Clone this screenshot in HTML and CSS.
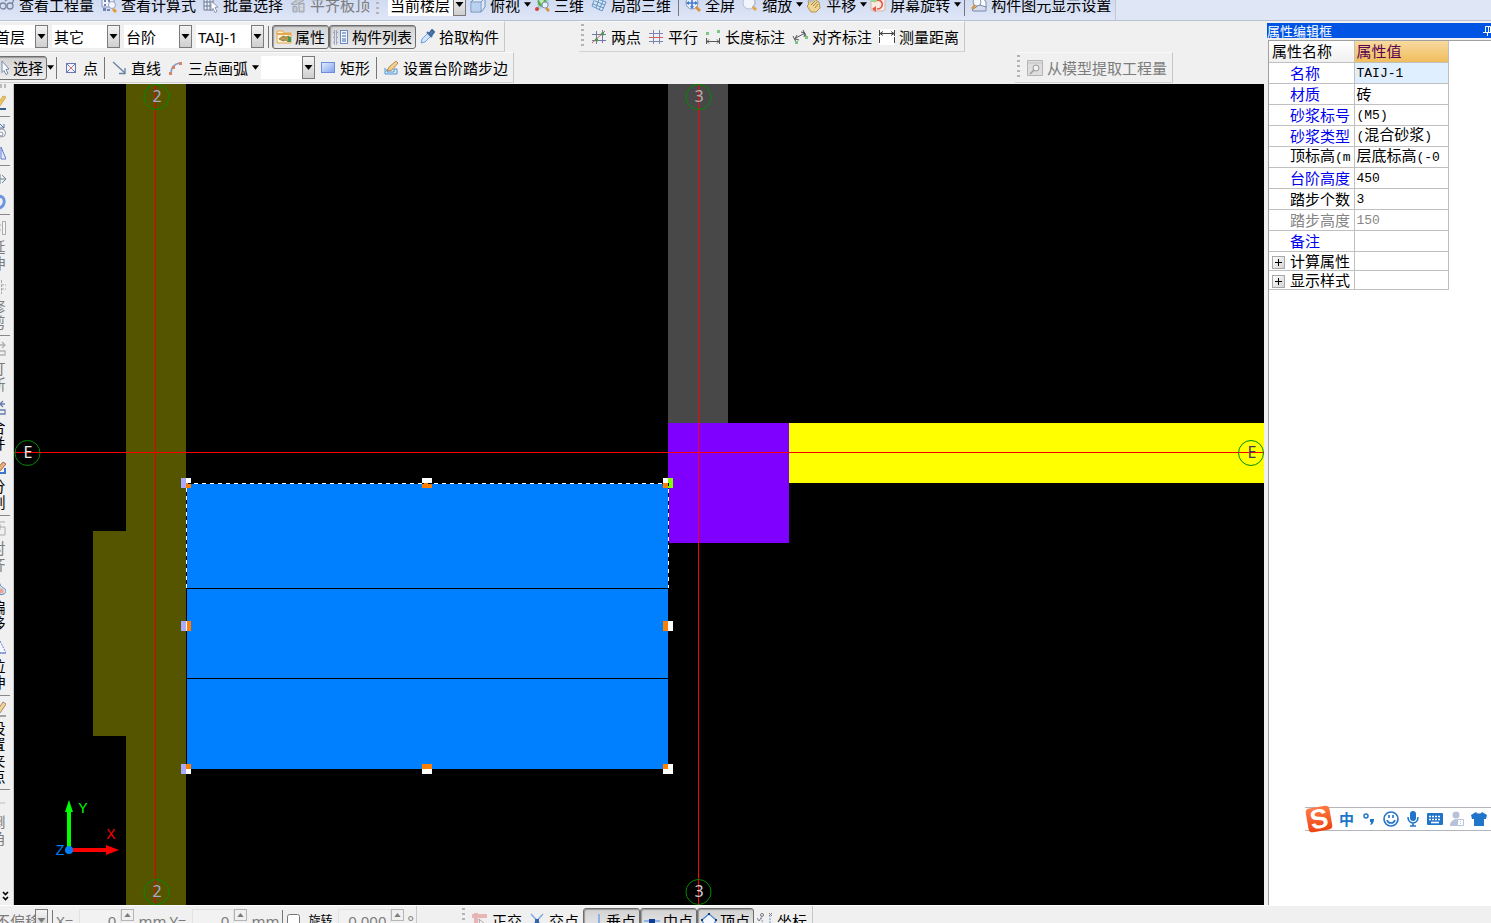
FILE: index.html
```html
<!DOCTYPE html>
<html lang="zh-CN">
<head>
<meta charset="utf-8">
<title>台阶 - 绘图</title>
<link rel="stylesheet" href="styles.css">
</head>
<body>
<svg class="symbols" aria-hidden="true">
  <defs>
    <linearGradient id="g-blue" x2="1" y2="1"><stop offset="0" stop-color="#e4edff"/><stop offset="1" stop-color="#7fa2ea"/></linearGradient>
    <linearGradient id="g-logo" y2="1" x2="0"><stop offset="0" stop-color="#ff7a45"/><stop offset="1" stop-color="#ee4410"/></linearGradient>
  </defs>
  <symbol id="i-drop" viewBox="0 0 8 5"><path d="M0 0h8L4 5z" fill="currentColor"/></symbol>
  <symbol id="i-glasses" viewBox="0 0 16 16"><g fill="none" stroke="#7b869c" stroke-width="1.3"><circle cx="4" cy="9" r="3"/><circle cx="11" cy="9" r="3"/><path d="M13 7l2-5-3-1M6 4l3-2"/></g></symbol>
  <symbol id="i-calc" viewBox="0 0 16 16"><path d="M1 0h12v10H1z" fill="#eef3fc" stroke="#8492b4"/><path d="M3 3h2v2H3zM7 3h2v2H7zM3 7h2v2H3zM2 11h3v3H2zM6 12h3v2H6z" fill="#6f83b5"/><circle cx="11" cy="8" r="3.5" fill="#f5f8ff" stroke="#96a3bd"/><path d="M12 12l3 3" stroke="#e59a39" stroke-width="3"/></symbol>
  <symbol id="i-batch" viewBox="0 0 16 16"><path d="M1 1h9v12H1zM1 5h9M1 9h9M4 1v12M7 1v12" fill="#eef2fb" stroke="#6b7793"/><path d="M8 4l7 6-3 .5 2 4-2 1-2-4-2 2z" fill="#fff" stroke="#8c97ae"/></symbol>
  <symbol id="i-align" viewBox="0 0 16 16"><path d="M1 7l7-5 6 1-8 5zM3 9l4 1v5H3zM9 7l5-1v9H9z" fill="#c3c8d1" stroke="#9da3ad"/><path d="M10 9h3M10 12h3" stroke="#eee"/></symbol>
  <symbol id="i-cube" viewBox="0 0 16 16"><path d="M1 5l4-4h10v9l-4 5H1z" fill="#dceafa" stroke="#6f8fb9"/><path d="M1 5h10v10M11 5l4-4" fill="none" stroke="#6f8fb9"/><path d="M2 6h8v8H2z" fill="#b9d2f0"/></symbol>
  <symbol id="i-3d" viewBox="0 0 16 16"><path d="M1 14l5-10 8-3 1 8-7 2z" fill="#a8cce4"/><circle cx="8" cy="5" r="4.5" fill="#58ad4f"/><path d="M5 3l3-2 2 3-3 3z" fill="#c2edba"/><circle cx="3" cy="12" r="2" fill="#d54536"/><circle cx="11" cy="8" r="3" fill="#e9f2fc" stroke="#8296b2"/><path d="M12 11l3 3" stroke="#d29439" stroke-width="2.5"/></symbol>
  <symbol id="i-local" viewBox="0 0 16 16"><path d="M4 1l11 4-4 9L1 9z" fill="#d7e7f9" stroke="#6693c2"/><path d="M8 2L5 11M12 4l-4 9M2 7l11 4M4 4l10 4" stroke="#6693c2" fill="none"/></symbol>
  <symbol id="i-full" viewBox="0 0 16 16"><circle cx="7" cy="6" r="6" fill="#e5f0ff" stroke="#8a94ab"/><path d="M7 1v10M2 6h10" stroke="#4979c9" stroke-width="1.6"/><path d="M7 0l2 3H5zM7 12l2-3H5zM1 6l3-2v4zM13 6l-3-2v4z" fill="#4979c9"/><path d="M11 10l4 4" stroke="#dc913a" stroke-width="3"/></symbol>
  <symbol id="i-zoom" viewBox="0 0 16 16"><circle cx="7" cy="6" r="6" fill="#f1f5fc" stroke="#b9c0ce"/><path d="M11 1c3 3 3 6-1 9" stroke="#a9b4c5" fill="none"/><path d="M11 10l3 3" stroke="#e1a646" stroke-width="3"/></symbol>
  <symbol id="i-hand" viewBox="0 0 16 16"><path d="M2 4l4-3 7 4 1 6-4 4H5L1 9l2-2z" fill="#efd593" stroke="#b79551"/><path d="M5 8l4-4M7 9l4-4M9 11l3-4" stroke="#a98743"/><path d="M2 2l4-2 3 3-5 3z" fill="#aebdd0"/></symbol>
  <symbol id="i-rotate" viewBox="0 0 16 16"><rect x="1" y="1" width="14" height="13" rx="2" fill="#fbeadf" stroke="#d4b7a8"/><path d="M4 5c3-3 7-2 8 1s-1 6-5 6" fill="none" stroke="#e2574b" stroke-width="1.6"/><path d="M6 9v6l-4-3z" fill="#e2574b"/><path d="M1 1h6v4H1z" fill="#9bd78e"/></symbol>
  <symbol id="i-display" viewBox="0 0 16 16"><path d="M1 13l7-5 7 1v5H2z" fill="#d5dded" stroke="#7b8aa8"/><path d="M8 2l4-1 3 4v5l-6-2z" fill="#fff" stroke="#7b8aa8"/><circle cx="6" cy="5" r="4" fill="#f4f8ff" stroke="#8a94a8"/><path d="M4 8l-3 4" stroke="#d89a3a" stroke-width="2.5"/></symbol>
  <symbol id="i-prop" viewBox="0 0 16 16"><path d="M1 2h6l1 2h7v10H1z" fill="#fff3d8" stroke="#e6a74d"/><path d="M1 5h14" stroke="#e6a74d" stroke-width="2"/><path d="M3 10l4-3 3 1 3-1 2 4-3 2-2-2-3 1z" fill="#b89a4f" stroke="#7a6530" stroke-width=".7"/><path d="M12 8h3v5h-3z" fill="#3f9a58"/></symbol>
  <symbol id="i-list" viewBox="0 0 16 16"><path d="M1 2h3v3H1zM1 7h3v3H1zM1 12h3v3H1z" fill="none" stroke="#5a74ad" stroke-dasharray="1 1"/><rect x="7.500" y="1.500" width="7" height="13" fill="#f1f6ff" stroke="#6c88bd"/><path d="M9 4h4M9 7h4M9 10h4M9 12h4" stroke="#3c66b0"/></symbol>
  <symbol id="i-pick" viewBox="0 0 16 16"><path d="M2 14l1-4 6-6 3 3-6 6z" fill="#cfe4fa" stroke="#6a9fdb"/><path d="M8 3l5 5M10 5l3-4 2 2-3 4z" stroke="#44699d" stroke-width="2" fill="#5f83b4"/></symbol>
  <symbol id="i-twopt" viewBox="0 0 16 16"><path d="M5.500 2v13M11.500 1v13M1 5.500h14M1 11.500h14" stroke="#7479aa" fill="none"/><path d="M1 14L14 2" stroke="#c35a5a"/><circle cx="5.500" cy="11" r="1.700" fill="#4b9c50"/><circle cx="11.500" cy="5" r="1.700" fill="#4b9c50"/></symbol>
  <symbol id="i-parallel" viewBox="0 0 16 16"><path d="M5.500 1v14M11.500 1v14M1 4.500h14M1 12.500h14" stroke="#7e84b3" fill="none"/><path d="M1 8.500h14" stroke="#d06060"/></symbol>
  <symbol id="i-len" viewBox="0 0 16 16"><path d="M1 3h3v3H1zM12 1h3v3h-3z" fill="#78c882"/><path d="M1.500 9v6M14.500 9v6M2 12.500h12M4 10.500l-2 2 2 2M12 10.500l2 2-2 2" fill="none" stroke="#555"/></symbol>
  <symbol id="i-aligndim" viewBox="0 0 16 16"><path d="M1 7l3 6M11 1l3 6M2 10L13 4M5 6l-2 4 4 1M9 3l4 1-1 4" fill="none" stroke="#555"/><path d="M3 12h3v3H3zM13 7h3v3h-3z" fill="#78c882"/></symbol>
  <symbol id="i-measure" viewBox="0 0 16 16"><path d="M0 0h16v16H0z" fill="#fff"/><path d="M.500 1v14M15.500 1v14" stroke="#444" stroke-dasharray="6 1"/><path d="M1 4.500h14M4 2.500l-3 2 3 2M12 2.500l3 2-3 2" stroke="#444" fill="none"/></symbol>
  <symbol id="i-cursor" viewBox="0 0 16 16"><path d="M8 1l7 8-3 .5 2 4-2 1-2-4-2 2z" fill="#f7fbff" stroke="#7b8ba8"/></symbol>
  <symbol id="i-point" viewBox="0 0 16 16"><path d="M3.500 3.500h9v9h-9z" fill="#eef2ff" stroke="#6b78ae"/><path d="M5 5l6 6M11 5l-6 6" stroke="#cf7777"/><path d="M3 3l3 3M13 3l-3 3M3 13l3-3M13 13l-3-3" stroke="#6b78ae"/></symbol>
  <symbol id="i-line" viewBox="0 0 16 16"><path d="M2 2l12 11" stroke="#68809f" stroke-width="1.300"/><path d="M14 8v5.500H8" fill="none" stroke="#68809f" stroke-width="1.300"/></symbol>
  <symbol id="i-arc" viewBox="0 0 16 16"><path d="M3 13C3 7 6 4 12 3" fill="none" stroke="#7f99c4" stroke-width="1.500"/><path d="M1 12h3v3H1zM4 6h3v3H4zM11 2h3v3h-3z" fill="#d9836c"/></symbol>
  <symbol id="i-rect" viewBox="0 0 16 16"><rect x="1.500" y="2.500" width="13" height="10" fill="url(#g-blue)" stroke="#6d8ddd"/></symbol>
  <symbol id="i-step" viewBox="0 0 16 16"><path d="M2 8v6h12V9h-3v3H4V9" fill="#d9ecff" stroke="#4c94ce"/><path d="M4 11l2-4 7-6 2 2-6 7z" fill="#f2ce8b" stroke="#a87a39" stroke-width=".8"/></symbol>
  <symbol id="i-model" viewBox="0 0 16 16"><path d="M.500 .500h15v15H.500z" fill="#dedede" stroke="#b5b5b5"/><path d="M1 3h14" stroke="#c3c3c3"/><circle cx="9" cy="8" r="3" fill="#f2f2f2" stroke="#999"/><path d="M7 10l-4 4" stroke="#999" stroke-width="1.500"/></symbol>
  <symbol id="i-brush" viewBox="0 0 16 16"><path d="M7 10l6-9 3 1-6 9z" fill="#efc65e" stroke="#b38e3c" stroke-width=".6"/><path d="M5 10l5 3-3 2H1z" fill="#fff" stroke="#6d7893"/><path d="M10 14h6" stroke="#355f88" stroke-width="2"/></symbol>
  <symbol id="i-copy" viewBox="0 0 16 16"><path d="M9 1l5 5M14 2v4h-4" stroke="#5271a8" fill="none"/><circle cx="11.500" cy="11" r="4" fill="#fff" stroke="#8a91a5"/><circle cx="11" cy="12" r="2" fill="none" stroke="#8a91a5"/></symbol>
  <symbol id="i-mirror" viewBox="0 0 16 16"><path d="M11 2v12h5z" fill="#e6edff" stroke="#5c7acd"/><path d="M7 2v12H1z" fill="#e6edff" stroke="#5c7acd"/></symbol>
  <symbol id="i-move" viewBox="0 0 16 16"><path d="M1 8h14M12 4l4 4-4 4M10 3v10" fill="none" stroke="#6a8793"/></symbol>
  <symbol id="i-turn" viewBox="0 0 16 16"><path d="M6 3c6-2 9 1 8 6-1 4-4 5-6 5" fill="none" stroke="#6d95e2" stroke-width="3"/></symbol>
  <symbol id="i-ext" viewBox="0 0 16 16"><path d="M12.500 1.500h3v13h-3zM3 5h8M3 10h8" fill="#f7f7f7" stroke="#aaa"/></symbol>
  <symbol id="i-trim" viewBox="0 0 16 16"><path d="M11.500 1v14M3 6h13M3 10h13" stroke="#aaa" stroke-dasharray="3 1" fill="none"/></symbol>
  <symbol id="i-break" viewBox="0 0 16 16"><path d="M9 4h6M12 1l3 3-3 3M3 10h12v4H3z" fill="none" stroke="#b0b0b0" stroke-width="1.300"/></symbol>
  <symbol id="i-join" viewBox="0 0 16 16"><path d="M15 4h-5M13 1l-3 3 3 3M3 10h12v4H3z" fill="none" stroke="#657dae" stroke-width="1.300"/></symbol>
  <symbol id="i-split" viewBox="0 0 16 16"><path d="M7 10l6-7 3 2-6 7z" fill="#efb276" stroke="#9b6b58"/><path d="M3 14h12V9" fill="none" stroke="#3b76c7" stroke-width="2"/></symbol>
  <symbol id="i-al" viewBox="0 0 16 16"><path d="M3 1h12M6 13V6h9v8H6M10 3v6" fill="none" stroke="#aaa"/></symbol>
  <symbol id="i-off" viewBox="0 0 16 16"><path d="M3 5c1-5 6-4 7-1 1 4 6 4 6 7 0 5-9 4-13 2z" fill="#c6e0f5" stroke="#668bb2"/><circle cx="11" cy="11" r="2.500" fill="#f1a08d"/></symbol>
  <symbol id="i-stretch" viewBox="0 0 16 16"><path d="M10 2l6 12H3z" fill="#f5f9ff" stroke="#5c7acd" stroke-dasharray="2 1"/><path d="M3 14h13" stroke="#5c7acd"/></symbol>
  <symbol id="i-grip" viewBox="0 0 16 16"><path d="M7 10l6-9 3 2-6 9z" fill="#efd793" stroke="#ad806f"/><path d="M10 15h6" stroke="#555"/></symbol>
  <symbol id="i-dash" viewBox="0 0 16 16"><path d="M3 8h12" stroke="#bbb"/></symbol>
  <symbol id="i-ortho" viewBox="0 0 16 16"><path d="M4 0v16M0 3h15" stroke="#e7b5b5" stroke-width="4"/><path d="M7 6l7 6-3 .5L9 15z" fill="#fff" stroke="#b0a0a0"/></symbol>
  <symbol id="i-cross" viewBox="0 0 16 16"><path d="M2 1l12 13M14 1L2 14" stroke="#78a9e5" stroke-width="1.400"/><path d="M6 6h4v4H6z" fill="#3765a5"/></symbol>
  <symbol id="i-perp" viewBox="0 0 16 16"><path d="M12 1v13M3 14h13" stroke="#78a9e5" stroke-width="1.600"/></symbol>
  <symbol id="i-mid" viewBox="0 0 16 16"><path d="M0 8h16" stroke="#78a9e5" stroke-width="1.600"/><path d="M5 6h6v5H5z" fill="#103f92"/></symbol>
  <symbol id="i-vertex" viewBox="0 0 16 16"><path d="M8 1l7 6-3 7H4L1 7z" fill="#f5f9ff" stroke="#5a8cc8" stroke-width="1.400"/><path d="M7 0h2v2H7zM0 6h2v2H0zM14 6h2v2h-2z" fill="#153b7a"/></symbol>
  <symbol id="i-coord" viewBox="0 0 16 16"><path d="M4 4l3 10 6-3V3" fill="none" stroke="#6f91cf" stroke-dasharray="2 1"/><circle cx="5" cy="2" r="1.500" fill="none" stroke="#777"/><path d="M12 0l3 3M15 0l-3 3M0 5l2 3 2-3" stroke="#777" fill="none"/></symbol>
</svg>

<header class="bar bar-view">
  <nav class="tools tools-view">
    <button class="tool"><svg class="icon"><use href="#i-glasses"/></svg>查看工程量</button>
    <button class="tool"><svg class="icon"><use href="#i-calc"/></svg>查看计算式</button>
    <button class="tool"><svg class="icon"><use href="#i-batch"/></svg>批量选择</button>
    <button class="tool" disabled><svg class="icon"><use href="#i-align"/></svg>平齐板顶</button>
    <span class="grip"></span>
    <span class="combo combo-floor"><select aria-label="楼层范围"><option>当前楼层</option></select><span class="combo-arrow"><svg><use href="#i-drop"/></svg></span></span>
    <button class="tool menu"><svg class="icon"><use href="#i-cube"/></svg>俯视<svg class="caret"><use href="#i-drop"/></svg></button>
    <button class="tool"><svg class="icon"><use href="#i-3d"/></svg>三维</button>
    <button class="tool"><svg class="icon"><use href="#i-local"/></svg>局部三维</button>
    <span class="sep"></span>
    <button class="tool"><svg class="icon"><use href="#i-full"/></svg>全屏</button>
    <button class="tool menu"><svg class="icon"><use href="#i-zoom"/></svg>缩放<svg class="caret"><use href="#i-drop"/></svg></button>
    <button class="tool menu"><svg class="icon"><use href="#i-hand"/></svg>平移<svg class="caret"><use href="#i-drop"/></svg></button>
    <button class="tool menu"><svg class="icon"><use href="#i-rotate"/></svg>屏幕旋转<svg class="caret"><use href="#i-drop"/></svg></button>
    <span class="sep"></span>
    <button class="tool"><svg class="icon"><use href="#i-display"/></svg>构件图元显示设置</button>
  </nav>
</header>

<main class="main">
  <section class="work">
    <div class="bar">
      <div class="tools tools-part">
        <span class="combo combo-cut"><select aria-label="楼层"><option>首层</option></select><span class="combo-arrow"><svg><use href="#i-drop"/></svg></span></span>
        <span class="combo"><select aria-label="构件分类"><option>其它</option></select><span class="combo-arrow"><svg><use href="#i-drop"/></svg></span></span>
        <span class="combo"><select aria-label="构件类型"><option>台阶</option></select><span class="combo-arrow"><svg><use href="#i-drop"/></svg></span></span>
        <span class="combo"><select aria-label="构件"><option>TAIJ-1</option></select><span class="combo-arrow"><svg><use href="#i-drop"/></svg></span></span>
        <span class="sep"></span>
        <button class="tool on" aria-pressed="true"><svg class="icon"><use href="#i-prop"/></svg>属性</button>
        <button class="tool on" aria-pressed="true"><svg class="icon"><use href="#i-list"/></svg>构件列表</button>
        <button class="tool"><svg class="icon"><use href="#i-pick"/></svg>拾取构件</button>
      </div>
      <div class="tools tools-aux">
        <span class="grip"></span>
        <button class="tool"><svg class="icon"><use href="#i-twopt"/></svg>两点</button>
        <button class="tool"><svg class="icon"><use href="#i-parallel"/></svg>平行</button>
        <button class="tool"><svg class="icon"><use href="#i-len"/></svg>长度标注</button>
        <button class="tool"><svg class="icon"><use href="#i-aligndim"/></svg>对齐标注</button>
        <button class="tool"><svg class="icon"><use href="#i-measure"/></svg>测量距离</button>
      </div>
    </div>
    <div class="bar">
      <div class="tools tools-draw">
        <button class="tool on" aria-pressed="true"><svg class="icon"><use href="#i-cursor"/></svg>选择</button>
        <button class="more" aria-label="选择方式"><svg class="caret"><use href="#i-drop"/></svg></button>
        <span class="sep"></span>
        <button class="tool"><svg class="icon"><use href="#i-point"/></svg>点</button>
        <span class="sep"></span>
        <button class="tool"><svg class="icon"><use href="#i-line"/></svg>直线</button>
        <button class="tool menu"><svg class="icon"><use href="#i-arc"/></svg>三点画弧<svg class="caret"><use href="#i-drop"/></svg></button>
        <span class="combo combo-arc"><select aria-label="半径"><option></option></select><span class="combo-arrow"><svg><use href="#i-drop"/></svg></span></span>
        <button class="tool"><svg class="icon"><use href="#i-rect"/></svg>矩形</button>
        <span class="sep"></span>
        <button class="tool"><svg class="icon"><use href="#i-step"/></svg>设置台阶踏步边</button>
      </div>
      <div class="tools tools-model">
        <span class="grip"></span>
        <button class="tool" disabled><svg class="icon"><use href="#i-model"/></svg>从模型提取工程量</button>
      </div>
    </div>

    <div class="stage">
      <aside class="rail">
        <span class="rail-grip"></span>
        <button class="edit" aria-label="删除"><svg class="icon"><use href="#i-brush"/></svg></button>
        <hr>
        <button class="edit" aria-label="复制"><svg class="icon"><use href="#i-copy"/></svg></button>
        <button class="edit" aria-label="镜像"><svg class="icon"><use href="#i-mirror"/></svg></button>
        <hr>
        <button class="edit" aria-label="移动"><svg class="icon"><use href="#i-move"/></svg></button>
        <button class="edit" aria-label="旋转"><svg class="icon"><use href="#i-turn"/></svg></button>
        <hr>
        <button class="edit" disabled><svg class="icon"><use href="#i-ext"/></svg><span>延伸</span></button>
        <button class="edit" disabled><svg class="icon"><use href="#i-trim"/></svg><span>修剪</span></button>
        <hr>
        <button class="edit" disabled><svg class="icon"><use href="#i-break"/></svg><span>打断</span></button>
        <button class="edit"><svg class="icon"><use href="#i-join"/></svg><span>合并</span></button>
        <button class="edit"><svg class="icon"><use href="#i-split"/></svg><span>分割</span></button>
        <hr>
        <button class="edit" disabled><svg class="icon"><use href="#i-al"/></svg><span>对齐</span></button>
        <button class="edit"><svg class="icon"><use href="#i-off"/></svg><span>偏移</span></button>
        <button class="edit"><svg class="icon"><use href="#i-stretch"/></svg><span>拉伸</span></button>
        <hr>
        <button class="edit"><svg class="icon"><use href="#i-grip"/></svg><span>设置夹点</span></button>
        <hr>
        <button class="edit" disabled><svg class="icon"><use href="#i-dash"/></svg><span>倒角</span></button>
        <svg class="rail-more" viewBox="0 0 7 11"><path d="M1 1l2.500 2.500L6 1M1 6l2.500 2.500L6 6" fill="none" stroke="#000" stroke-width="1.600"/></svg>
      </aside>

      <svg class="canvas" viewBox="14 84 1250 821" preserveAspectRatio="xMinYMin slice" role="img" aria-label="平面图">
        <g shape-rendering="crispEdges">
          <path d="M126 84h60v821h-60V736H93V531h33z" fill="#550"/>
          <path d="M668 84h60v339h-60z" fill="#484848"/>
          <path d="M789 423h475v60H789z" fill="#ff0"/>
          <path d="M668 423h121v120H668z" fill="#8000ff"/>
          <path d="M187 484h481v285H187z" fill="#0080ff"/>
          <path d="M186 588h482v1H187v180h-1zM186 678h482v1H186z" fill="#000"/>
          <path d="M186.500 588V483.500H668.500V588" fill="none" stroke="#000"/>
          <path d="M186.500 588V483.500H668.500V588" fill="none" stroke="#fff" stroke-dasharray="4 4"/>
          <rect x="155" y="84" width="1" height="821" fill="#e00000"/>
          <rect x="698" y="84" width="1" height="821" fill="#f00"/>
          <rect x="14" y="452" width="1250" height="1" fill="#f00"/>
        </g>
        <g fill="none" stroke="#008c00">
          <circle cx="156.500" cy="97" r="12.500"/><circle cx="156.500" cy="892" r="12.500"/>
          <circle cx="698.500" cy="97" r="12.500"/><circle cx="698.500" cy="892" r="12.500"/>
          <circle cx="27.500" cy="453" r="12.500"/><circle cx="1251" cy="453" r="12.500"/>
        </g>
        <g class="axis">
          <text x="157" y="102" fill="#a9a9c8">2</text><text x="157" y="897" fill="#a9a9c8">2</text>
          <text x="699" y="102" fill="#b0b0b0">3</text><text x="699" y="897" fill="#d0d0d0">3</text>
          <text x="28" y="458" fill="#e8e8e8">E</text><text x="1252" y="458" fill="#3c3c50">E</text>
        </g>
        <g shape-rendering="crispEdges">
          <path d="M181 478h5v10h-5zM181 621h5v10h-5zM181 764h5v10h-5z" fill="#aaaaff"/>
          <path d="M186 478h5v5h-5zM422 478h10v5h-10zM663 478h5v5h-5zM186 621h1v10h-1zM668 621h5v10h-5zM186 769h5v5h-5zM422 769h10v5h-10zM663 769h5v5h-5zM668 764h5v10h-5z" fill="#fff"/>
          <path d="M186 483h5v5h-5zM422 483h10v5h-10zM663 483h5v5h-5zM187 621h4v10h-4zM663 621h5v10h-5zM186 764h5v5h-5zM422 764h10v5h-10zM663 764h5v5h-5z" fill="#ff8000"/>
          <path d="M668 478h5v10h-5z" fill="#80ff00"/>
          <path d="M668 483h1v3h-1zM188 483h3v1h-3zM422 483h2v1h-2zM428 483h4v1h-4z" fill="#000"/>
        </g>
        <path d="M67 848V812h-2l4-12 4 12h-2v36z" fill="#0f0"/>
        <path d="M71 848h35v-3l13 5-13 5v-3H71z" fill="#f00"/>
        <circle cx="69" cy="850" r="4" fill="#0080ff"/>
        <g class="gizmo">
          <text x="83" y="813" fill="#0f0">Y</text><text x="111" y="839" fill="#f00">X</text><text x="60" y="855" fill="#0080ff">Z</text>
        </g>
      </svg>
    </div>
  </section>

  <aside class="panel">
    <h2 class="panel-title">属性编辑框
      <svg class="pin" viewBox="0 0 8 11"><path d="M0 7.500h8M2.500 7V1.500h5V7M5.500 1v6M4.500 8v3" stroke="#fff" fill="none"/></svg>
    </h2>
    <div class="panel-body">
      <table class="props">
        <thead><tr><th>属性名称</th><th class="val-head">属性值</th></tr></thead>
        <tbody>
          <tr class="key current"><th>名称</th><td><span class="half">TAIJ-1</span></td></tr>
          <tr class="key"><th>材质</th><td>砖</td></tr>
          <tr class="key"><th>砂浆标号</th><td><span class="half">(M5)</span></td></tr>
          <tr class="key"><th>砂浆类型</th><td><span class="half">(</span>混合砂浆<span class="half">)</span></td></tr>
          <tr><th>顶标高<span class="half">(m</span></th><td>层底标高<span class="half">(-0</span></td></tr>
          <tr class="key"><th>台阶高度</th><td><span class="half">450</span></td></tr>
          <tr><th>踏步个数</th><td><span class="half">3</span></td></tr>
          <tr class="off"><th>踏步高度</th><td><span class="half">150</span></td></tr>
          <tr class="key"><th>备注</th><td></td></tr>
          <tr class="group"><th><button class="expand" aria-label="展开计算属性"></button>计算属性</th><td></td></tr>
          <tr class="group"><th><button class="expand" aria-label="展开显示样式"></button>显示样式</th><td></td></tr>
        </tbody>
      </table>
    </div>
  </aside>
</main>

<footer class="status">
  <div class="tools tools-offset">
    <span class="combo combo-cut"><select aria-label="偏移方式" disabled><option>不偏移</option></select><span class="combo-arrow"><svg><use href="#i-drop"/></svg></span></span>
    <span class="sep"></span>
    <label for="dx">X=</label>
    <span class="spin"><input id="dx" value="0" disabled><span class="spin-up"><svg><use href="#i-drop"/></svg></span></span>
    <span class="unit">mm</span>
    <label for="dy">Y=</label>
    <span class="spin"><input id="dy" value="0" disabled><span class="spin-up"><svg><use href="#i-drop"/></svg></span></span>
    <span class="unit">mm</span>
    <span class="sep"></span>
    <input class="check" type="checkbox" id="rot"><label class="rot" for="rot">旋转</label>
    <span class="spin spin-angle"><input aria-label="角度" value="0.000" disabled><span class="spin-up"><svg><use href="#i-drop"/></svg></span></span>
    <span class="degree">°</span>
  </div>
  <div class="tools tools-snap">
    <span class="grip"></span>
    <button class="tool"><svg class="icon"><use href="#i-ortho"/></svg>正交</button>
    <button class="tool"><svg class="icon"><use href="#i-cross"/></svg>交点</button>
    <button class="tool on" aria-pressed="true"><svg class="icon"><use href="#i-perp"/></svg>垂点</button>
    <button class="tool on" aria-pressed="true"><svg class="icon"><use href="#i-mid"/></svg>中点</button>
    <button class="tool on" aria-pressed="true"><svg class="icon"><use href="#i-vertex"/></svg>顶点</button>
    <button class="tool"><svg class="icon"><use href="#i-coord"/></svg>坐标</button>
  </div>
</footer>

<div class="ime">
  <svg class="ime-logo" viewBox="0 0 28 28"><g transform="rotate(-10 14 14)"><rect x="2" y="2" width="24" height="24" rx="4" fill="url(#g-logo)"/><text x="14" y="23" text-anchor="middle">S</text></g></svg>
  <span class="ime-mode">中</span>
  <svg viewBox="0 0 16 16"><circle cx="5" cy="5" r="2" fill="none" stroke="#2175c9" stroke-width="1.500"/><path d="M9 8h4c0 3-1 5-3 6l-1-1c1 0 1-1 1-2H9z" fill="#2175c9"/></svg>
  <svg viewBox="0 0 16 16"><circle cx="8" cy="8" r="7" fill="none" stroke="#2175c9" stroke-width="1.600"/><path d="M6 4v3M10 4v3M4 9c1 4 7 4 8 0" fill="none" stroke="#2175c9" stroke-width="1.600"/></svg>
  <svg viewBox="0 0 16 16"><rect x="5" width="6" height="10" rx="3" fill="#2175c9"/><path d="M3 6c0 8 10 8 10 0M8 12v3M5 15h6" fill="none" stroke="#2175c9" stroke-width="1.600"/></svg>
  <svg viewBox="0 0 16 16"><rect y="2" width="16" height="12" rx="1" fill="#2175c9"/><path d="M2 5.500h12M2 8.500h12" stroke="#fff" stroke-width="1.600" stroke-dasharray="2 1"/><path d="M4 11.500h8" stroke="#fff" stroke-width="1.600"/></svg>
  <svg viewBox="0 0 16 16"><circle cx="7" cy="4" r="3.500" fill="#b7c2d8"/><path d="M1 15c0-9 12-9 12 0z" fill="#b7c2d8"/><path d="M8.500 8.500h6v6h-6z" fill="#fff" stroke="#b7c2d8"/><path d="M11 10h1v1h-1zM11 12h1v1h-1z" fill="#b7c2d8"/></svg>
  <svg viewBox="0 0 16 16"><path d="M5 1c1 2 5 2 6 0l5 3-1 4h-2v7H3V8H1L0 4z" fill="#2175c9"/></svg>
</div>
</body>
</html>
```

FILE: styles.css
```css
* { box-sizing: border-box; }

body {
  margin: 0;
  height: 100vh;
  display: flex;
  flex-direction: column;
  overflow: hidden;
  position: relative;
  background: #f0f0f0;
  color: #000;
  font: 15px/20px "Noto Sans", "Noto Sans CJK SC", sans-serif;
}

button, select, input { font: inherit; color: inherit; }
button { border: 0; background: none; }
.symbols { position: absolute; width: 0; height: 0; }
.icon { width: 16px; height: 16px; flex: none; }
.caret { width: 7px; height: 5px; flex: none; }

/* toolbars */
.bar { display: flex; flex: none; height: 31px; overflow: hidden; }
.bar-view {
  height: 21px;
  align-items: flex-end;
  background: #dfe6f5;
  border-bottom: 1px solid #b9c0d0;
}
.tools {
  display: flex;
  align-items: center;
  flex: none;
  height: 31px;
  border-right: 1px solid #c8c8c8;
  border-bottom: 1px solid #d2d2d2;
  border-top: 1px solid #fafafa;
}
.tools-view {
  margin-left: -4px;
  background: linear-gradient(#c9d5ee, #dfe6f8);
  border-top: 0;
  border-bottom: 0;
}
.tools-part { margin-left: -7px; padding-right: 1px; }
.tools-aux { margin-left: 74px; padding-right: 1px; }
.tools-draw { margin-left: -10px; padding-right: 1px; }
.tools-model { margin-left: 501px; padding-right: 1px; }

.tool {
  display: flex;
  align-items: center;
  flex: none;
  gap: 4px;
  height: 24px;
  padding: 0 4px 0 3px;
  white-space: nowrap;
}
.tool.menu { padding-right: 0; }
.tool:disabled { color: #7c7c7c; }
.tool.on {
  gap: 3px;
  padding: 0 3px;
  border: 1px solid #6e6e6e;
  border-radius: 3px;
  background: linear-gradient(#d2d2d2, #ececec);
  box-shadow: inset 1px 1px 1px #999;
}
.more { display: flex; padding: 0; }
.sep { flex: none; width: 1px; height: 22px; margin: 0 3px; background: #777; }
.tools-part .sep { margin-left: 0; }
.tools-draw .sep { margin-left: 2px; }
.grip {
  flex: none;
  width: 3px;
  height: 25px;
  margin: 0 4px 0 2px;
  background: repeating-linear-gradient(#b4b4b4 0 2px, transparent 2px 5px);
}

.combo {
  display: flex;
  flex: none;
  width: 68px;
  height: 23px;
  margin-right: 4px;
  background: #fff;
}
.combo select {
  flex: 1;
  min-width: 0;
  padding: 0 0 0 2px;
  border: 0;
  background: none;
  appearance: none;
  opacity: 1;
}
.combo-arrow {
  display: flex;
  align-items: center;
  justify-content: center;
  width: 13px;
  border: 1px solid #7a7a7a;
  background: linear-gradient(#f4f4f4, #cfcfcf);
}
.combo-arrow svg { width: 9px; height: 5px; }
.combo-cut { width: 55px; }
.combo-floor { width: 78px; margin: 0 1px 0 5px; }
.combo-arc { width: 54px; margin: 0 2px; }

/* drawing area */
.main { display: flex; flex: 1; min-height: 0; }
.work { display: flex; flex-direction: column; flex: 1; min-width: 0; }
.work .bar + .bar { height: 32px; }
.stage { display: flex; flex: 1; min-height: 0; }
.canvas { flex: 1; min-width: 0; height: 100%; background: #000; }
.axis { font: 16px "Noto Sans", sans-serif; text-anchor: middle; }
.gizmo { font: 14px "Liberation Sans", sans-serif; text-anchor: middle; }

.rail {
  display: flex;
  flex-direction: column;
  align-items: flex-end;
  flex: none;
  width: 14px;
  padding-right: 5px;
  overflow: hidden;
  border-right: 1px solid #c8c8c8;
}
.rail-grip { flex: none; width: 12px; height: 4px; margin-bottom: 3px; background: repeating-linear-gradient(90deg, #bbb 0 2px, transparent 2px 4px); }
.rail hr { flex: none; width: 20px; height: 1px; margin: 1px -2px 1px 0; border: 0; background: #888; }
.edit {
  display: flex;
  flex-direction: column;
  align-items: center;
  flex: none;
  gap: 3px;
  width: 20px;
  padding: 4px 2px 3px;
}
.rail-grip + .edit { padding-bottom: 4px; }
.edit span { width: 15px; padding-bottom: 1px; line-height: 16px; word-break: break-all; }
.edit:disabled { color: #7c7c7c; }
.rail-more { flex: none; width: 7px; height: 11px; margin: auto -1px 3px 0; }

/* property panel */
.panel { display: flex; flex-direction: column; flex: none; width: 224px; margin: 2px 0 0 3px; }
.panel-title {
  display: flex;
  align-items: center;
  justify-content: space-between;
  flex: none;
  height: 15px;
  margin: 0 0 2px;
  background: #0054e3;
  color: #fff;
  font: 13px/15px "Noto Sans CJK SC", sans-serif;
}
.pin { width: 8px; height: 11px; }
.panel-body {
  flex: 1;
  margin-left: 1px;
  border-top: 1px solid #a0a0a0;
  border-left: 1px solid #a0a0a0;
  background: #fff;
}
.props {
  width: 179px;
  table-layout: fixed;
  border-collapse: collapse;
  line-height: 16px;
  font-family: "Noto Sans CJK SC", sans-serif;
}
.props th, .props td {
  height: 21px;
  padding: 0 2px;
  overflow: hidden;
  border-right: 1px solid #c0c0c0;
  border-bottom: 1px solid #c0c0c0;
  font-weight: 400;
  text-align: left;
  white-space: nowrap;
}
.props th { width: 85px; }
.props tbody th { padding: 0 0 0 21px; }
.props thead th { padding-left: 3px; background: linear-gradient(#fff, #f0f0f0); }
.props thead .val-head { width: 94px; padding-left: 2px; background: linear-gradient(#f8d9a0, #f0bd5c); color: #5a0050; }
.props .key th { color: #0000f0; }
.props .current td { background: #e0efff; }
.props .off { color: #858585; }
.props .group th, .props .group td { height: 19px; }
.props tbody .group th { padding-left: 3px; }
.half { font: 13px/16px "Liberation Mono", monospace; }
.expand {
  width: 13px;
  height: 13px;
  margin: 0 5px 0 0;
  padding: 0;
  border: 1px solid #a8a8a8;
  vertical-align: -1px;
  background:
    linear-gradient(#000, #000) center / 7px 1px no-repeat,
    linear-gradient(#000, #000) center / 1px 7px no-repeat,
    linear-gradient(135deg, #fff, #d4d4d4);
}

/* status bar */
.status {
  display: flex;
  flex: none;
  height: 18px;
  overflow: hidden;
  border-top: 1px solid #fff;
}
.status .tools { height: 30px; border-top: 0; }
.tools-offset { margin-left: -7px; color: #7c7c7c; }
.tools-offset .combo { margin-right: 1px; background: #f0f0f0; }
.spin { display: flex; height: 24px; width: 55px; margin: 0 4px 0 6px; }
.spin input {
  flex: 1;
  min-width: 0;
  padding: 0 4px 0 0;
  border: 1px solid #e2e2e2;
  background: #f2f2f2;
  text-align: right;
}
.spin-up {
  display: flex;
  justify-content: center;
  width: 13px;
  height: 12px;
  padding-top: 3px;
  border: 1px solid #b5b5b5;
}
.spin-up svg { width: 7px; height: 4px; transform: rotate(180deg); }
.unit { width: 28px; margin-right: 3px; }
.unit + .sep { margin-left: 0; }
.spin-angle { width: 66px; margin-right: 3px; }
.check { width: 13px; height: 13px; margin: 0 8px 0 1px; }
.rot { color: #000; font-size: 12px; }
.degree { padding-right: 2px; }
.tools-snap { margin-left: 43px; padding-right: 1px; }
.tools-snap .tool.on { height: 26px; }

/* input method bar */
.ime {
  position: absolute;
  right: 0;
  bottom: 92px;
  display: flex;
  align-items: center;
  gap: 6px;
  height: 24px;
  padding-right: 4px;
  border-top: 1px solid #b4b4bc;
  border-bottom: 1px solid #b4b4bc;
  background: #fff;
}
.ime svg { width: 16px; height: 16px; }
.ime .ime-logo { width: 28px; height: 28px; }
.ime-logo text { font: bold 27px "Liberation Sans", sans-serif; fill: #fff; }
.ime-mode { width: 16px; color: #2175c9; font-weight: 700; }
```
